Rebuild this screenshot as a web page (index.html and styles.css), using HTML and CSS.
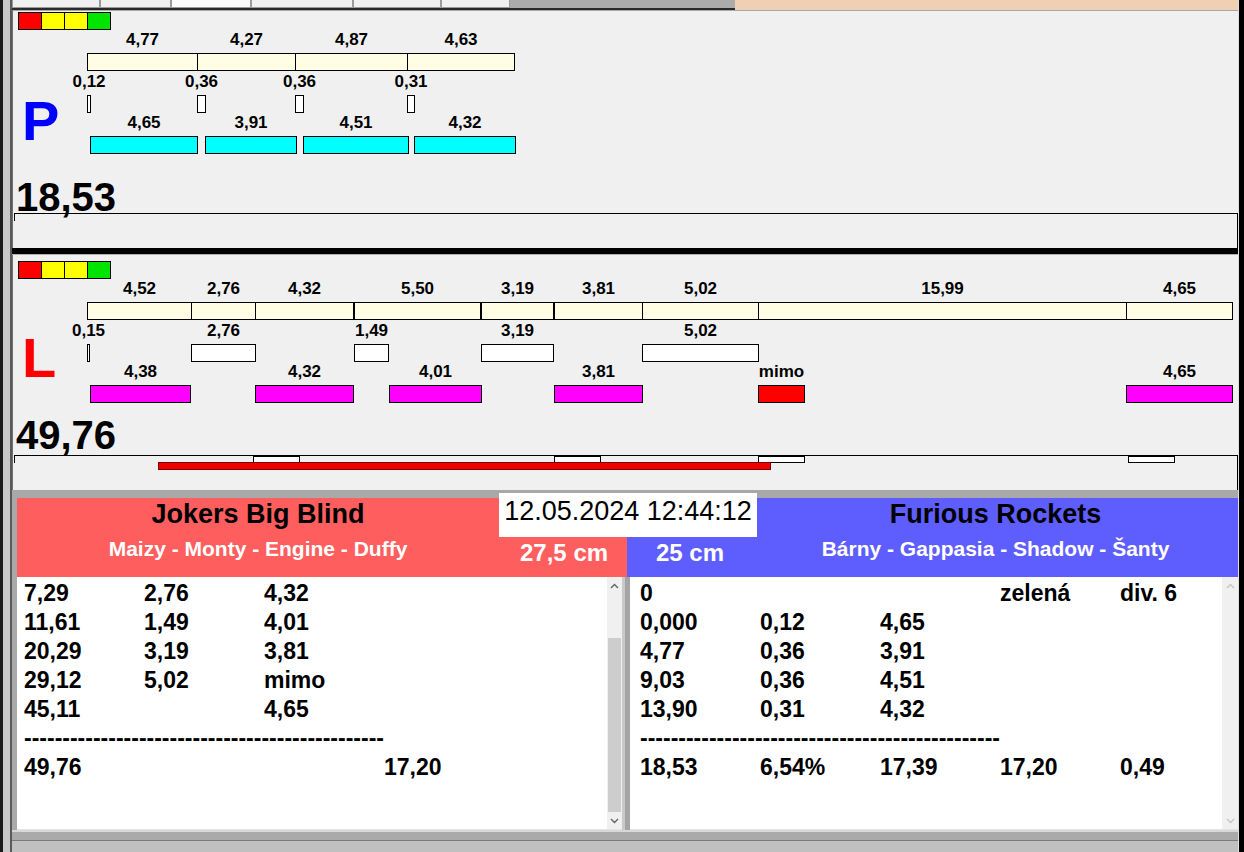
FILE: index.html
```html
<!DOCTYPE html>
<html lang="cs">
<head>
<meta charset="utf-8">
<title>Měření</title>
<link rel="stylesheet" href="styles.css">
</head>
<body>
<div class="app">
  <div class="edge-left"></div>
  <div class="main">
    <div class="topstrip">
      <div class="tabs">
        <span class="tab t1"></span>
        <span class="tab t2"></span>
        <span class="tab t3 sel"></span>
        <span class="tab t4"></span>
        <span class="tab t5"></span>
        <span class="tab t6"></span>
      </div>
      <div class="peach"></div>
    </div>

    <section class="panel panel-p">
      <div class="lights"><span class="light red"></span><span class="light yellow"></span><span class="light yellow"></span><span class="light green"></span></div>
      <div class="chart">
        <div class="letter letter-p">P</div>
        <div class="canvas">
          <div class="lbl r1" style="left:0;width:111px">4,77</div>
          <div class="lbl r1" style="left:110px;width:99px">4,27</div>
          <div class="lbl r1" style="left:208px;width:113px">4,87</div>
          <div class="lbl r1" style="left:320px;width:108px">4,63</div>
          <div class="bar b1" style="left:0;width:111px"></div>
          <div class="bar b1" style="left:110px;width:99px"></div>
          <div class="bar b1" style="left:208px;width:113px"></div>
          <div class="bar b1" style="left:320px;width:108px"></div>

          <div class="lbl r2" style="left:0;width:4px">0,12</div>
          <div class="lbl r2" style="left:110px;width:9px">0,36</div>
          <div class="lbl r2" style="left:208px;width:9px">0,36</div>
          <div class="lbl r2" style="left:320px;width:8px">0,31</div>
          <div class="bar b2" style="left:0;width:4px"></div>
          <div class="bar b2" style="left:110px;width:9px"></div>
          <div class="bar b2" style="left:208px;width:9px"></div>
          <div class="bar b2" style="left:320px;width:8px"></div>

          <div class="lbl r3" style="left:3px;width:108px">4,65</div>
          <div class="lbl r3" style="left:118px;width:92px">3,91</div>
          <div class="lbl r3" style="left:216px;width:106px">4,51</div>
          <div class="lbl r3" style="left:327px;width:102px">4,32</div>
          <div class="bar b3 cyan" style="left:3px;width:108px"></div>
          <div class="bar b3 cyan" style="left:118px;width:92px"></div>
          <div class="bar b3 cyan" style="left:216px;width:106px"></div>
          <div class="bar b3 cyan" style="left:327px;width:102px"></div>
        </div>
      </div>
      <div class="total">18,53</div>
      <div class="track"></div>
    </section>

    <div class="divider"></div>

    <section class="panel panel-l">
      <div class="lights"><span class="light red"></span><span class="light yellow"></span><span class="light yellow"></span><span class="light green"></span></div>
      <div class="chart">
        <div class="letter letter-l">L</div>
        <div class="canvas">
          <div class="lbl r1" style="left:0;width:105px">4,52</div>
          <div class="lbl r1" style="left:104px;width:65px">2,76</div>
          <div class="lbl r1" style="left:168px;width:99px">4,32</div>
          <div class="lbl r1" style="left:267px;width:127px">5,50</div>
          <div class="lbl r1" style="left:394px;width:73px">3,19</div>
          <div class="lbl r1" style="left:467px;width:89px">3,81</div>
          <div class="lbl r1" style="left:555px;width:117px">5,02</div>
          <div class="lbl r1" style="left:671px;width:369px">15,99</div>
          <div class="lbl r1" style="left:1039px;width:107px">4,65</div>
          <div class="bar b1" style="left:0;width:105px"></div>
          <div class="bar b1" style="left:104px;width:65px"></div>
          <div class="bar b1" style="left:168px;width:99px"></div>
          <div class="bar b1" style="left:267px;width:127px"></div>
          <div class="bar b1" style="left:394px;width:73px"></div>
          <div class="bar b1" style="left:467px;width:89px"></div>
          <div class="bar b1" style="left:555px;width:117px"></div>
          <div class="bar b1" style="left:671px;width:369px"></div>
          <div class="bar b1" style="left:1039px;width:107px"></div>

          <div class="lbl r2" style="left:0;width:3px">0,15</div>
          <div class="lbl r2" style="left:104px;width:65px">2,76</div>
          <div class="lbl r2" style="left:267px;width:35px">1,49</div>
          <div class="lbl r2" style="left:394px;width:73px">3,19</div>
          <div class="lbl r2" style="left:555px;width:117px">5,02</div>
          <div class="bar b2" style="left:0;width:3px"></div>
          <div class="bar b2" style="left:104px;width:65px"></div>
          <div class="bar b2" style="left:267px;width:35px"></div>
          <div class="bar b2" style="left:394px;width:73px"></div>
          <div class="bar b2" style="left:555px;width:117px"></div>

          <div class="lbl r3" style="left:3px;width:101px">4,38</div>
          <div class="lbl r3" style="left:168px;width:99px">4,32</div>
          <div class="lbl r3" style="left:302px;width:93px">4,01</div>
          <div class="lbl r3" style="left:467px;width:89px">3,81</div>
          <div class="lbl r3" style="left:671px;width:47px">mimo</div>
          <div class="lbl r3" style="left:1039px;width:107px">4,65</div>
          <div class="bar b3 mag" style="left:3px;width:101px"></div>
          <div class="bar b3 mag" style="left:168px;width:99px"></div>
          <div class="bar b3 mag" style="left:302px;width:93px"></div>
          <div class="bar b3 mag" style="left:467px;width:89px"></div>
          <div class="bar b3 miss" style="left:671px;width:47px"></div>
          <div class="bar b3 mag" style="left:1039px;width:107px"></div>
        </div>
      </div>
      <div class="total">49,76</div>
      <div class="track">
        <div class="tmark" style="left:239px;width:47px"></div>
        <div class="tmark" style="left:540px;width:47px"></div>
        <div class="tmark" style="left:744px;width:47px"></div>
        <div class="tmark" style="left:1114px;width:47px"></div>
        <div class="tbar" style="left:144px;width:613px"></div>
      </div>
    </section>

    <section class="bottom">
      <div class="headers">
        <div class="hdr hdr-left">
          <div class="titles">
            <div class="team">Jokers Big Blind</div>
            <div class="players">Maizy - Monty - Engine - Duffy</div>
          </div>
          <div class="cm">27,5 cm</div>
        </div>
        <div class="hdr hdr-right">
          <div class="cm">25 cm</div>
          <div class="titles">
            <div class="team">Furious Rockets</div>
            <div class="players">Bárny - Gappasia - Shadow - Šanty</div>
          </div>
        </div>
      </div>
      <div class="date">12.05.2024 12:44:12</div>

      <div class="lists">
        <div class="list list-left">
          <div class="rows">
            <div class="row"><span>7,29</span><span>2,76</span><span>4,32</span></div>
            <div class="row"><span>11,61</span><span>1,49</span><span>4,01</span></div>
            <div class="row"><span>20,29</span><span>3,19</span><span>3,81</span></div>
            <div class="row"><span>29,12</span><span>5,02</span><span>mimo</span></div>
            <div class="row"><span>45,11</span><span></span><span>4,65</span></div>
            <div class="row"><span class="dashes">-----------------------------------------------</span></div>
            <div class="row"><span>49,76</span><span></span><span></span><span>17,20</span></div>
          </div>
          <div class="sb">
            <div class="sb-btn"><svg width="9" height="6" viewBox="0 0 9 6"><path d="M1 5 L4.5 1.5 L8 5" fill="none" stroke="#606060" stroke-width="1.3"/></svg></div>
            <div class="sb-gap"></div>
            <div class="sb-thumb"></div>
            <div class="sb-fill"></div>
            <div class="sb-btn"><svg width="9" height="6" viewBox="0 0 9 6"><path d="M1 1 L4.5 4.5 L8 1" fill="none" stroke="#606060" stroke-width="1.3"/></svg></div>
          </div>
        </div>
        <div class="sep"></div>
        <div class="list list-right">
          <div class="rows">
            <div class="row"><span>0</span><span></span><span></span><span>zelená</span><span>div. 6</span></div>
            <div class="row"><span>0,000</span><span>0,12</span><span>4,65</span></div>
            <div class="row"><span>4,77</span><span>0,36</span><span>3,91</span></div>
            <div class="row"><span>9,03</span><span>0,36</span><span>4,51</span></div>
            <div class="row"><span>13,90</span><span>0,31</span><span>4,32</span></div>
            <div class="row"><span class="dashes">-----------------------------------------------</span></div>
            <div class="row"><span>18,53</span><span>6,54%</span><span>17,39</span><span>17,20</span><span>0,49</span></div>
          </div>
          <div class="sb">
            <div class="sb-btn"><svg width="9" height="6" viewBox="0 0 9 6"><path d="M1 5 L4.5 1.5 L8 5" fill="none" stroke="#c4c4c4" stroke-width="1.3"/></svg></div>
            <div class="sb-fill"></div>
            <div class="sb-btn"><svg width="9" height="6" viewBox="0 0 9 6"><path d="M1 1 L4.5 4.5 L8 1" fill="none" stroke="#c4c4c4" stroke-width="1.3"/></svg></div>
          </div>
        </div>
      </div>
      <div class="footer"></div>
    </section>
  </div>
  <div class="edge-right"></div>
</div>
</body>
</html>
```
FILE: styles.css
```css
* { box-sizing: border-box; margin: 0; padding: 0; }
html, body { width: 1244px; height: 852px; overflow: hidden; }
body {
  font-family: "Liberation Sans", Arial, sans-serif;
  font-weight: bold;
  color: #000;
  background: #f0f0f0;
}
.app { display: flex; width: 1244px; height: 852px; }
.edge-left {
  width: 12px;
  flex-shrink: 0;
  background: linear-gradient(to right, #1a1a1a 0, #1a1a1a 3px, #c8c8c8 3px, #c8c8c8 10px, #5a5a5a 10px, #5a5a5a 12px);
}
.edge-right {
  width: 6px;
  flex-shrink: 0;
  background: linear-gradient(to right, #e0e0e0 0, #e0e0e0 1px, #000 1px);
}
.main { width: 1226px; flex-shrink: 0; display: flex; flex-direction: column; }

/* top strip */
.topstrip { height: 10px; display: flex; flex-shrink: 0; }
.tabs { width: 723px; display: flex; background: #ababab; border-bottom: 2px solid #2a2a2a; }
.tab { height: 8px; background: #f0f0f0; border: 1px solid #9a9a9a; border-top: none; }
.tab.sel { background: #fbfbfb; }
.t1 { width: 88px; }
.t2 { width: 71px; }
.t3 { width: 80px; }
.t4 { width: 102px; }
.t5 { width: 88px; }
.t6 { width: 69px; }
.peach { flex: 1; background: #efd0b3; }

/* panels */
.panel {
  display: flex;
  flex-direction: column;
  flex-shrink: 0;
  border-left: 1px solid #6e6e6e;
  background: #f0f0f0;
}
.panel-p { height: 238px; border-top: 1px solid #a8a8a8; }
.panel-l { height: 235px; }
.divider { height: 7px; flex-shrink: 0; background: #000; border-bottom: 1px solid #b0b0b0; }

.lights { display: flex; margin-left: 5px; height: 18px; flex-shrink: 0; }
.panel-p .lights { margin-top: 1px; }
.panel-l .lights { margin-top: 6px; }
.light { width: 24px; height: 18px; border: 1px solid #000; margin-right: -1px; }
.red { background: #ff0000; }
.yellow { background: #ffff00; }
.green { background: #00e400; }

.chart { display: flex; height: 130px; flex-shrink: 0; }
.letter { width: 74px; font-size: 56px; line-height: 56px; padding-left: 9px; }
.letter-p { color: #0000ff; padding-top: 63px; }
.letter-l { color: #ff0000; padding-top: 51px; }
.canvas { position: relative; flex: 1; }

.lbl {
  position: absolute;
  display: flex;
  justify-content: center;
  white-space: nowrap;
  font-size: 17px;
  line-height: 20px;
  height: 20px;
}
.r1 { top: 0; }
.r2 { top: 42px; }
.r3 { top: 83px; }
.bar { position: absolute; height: 18px; border: 1px solid #000; }
.b1 { top: 23px; background: #fffde4; }
.b2 { top: 65px; background: #ffffff; }
.b3 { top: 106px; }
.cyan { background: #00ffff; }
.mag { background: #ff00ff; }
.miss { background: #ff0000; }

.total { font-size: 40px; line-height: 30px; height: 30px; padding-left: 3px; flex-shrink: 0; }
.panel-p .total { margin-top: 22px; }
.panel-l .total { margin-top: 11px; }

.track {
  position: relative;
  flex: 1;
  margin-left: 1px;
  border-top: 1px solid #000;
  border-right: 1px solid #000;
}
.panel-p .track { margin-top: 1px; }
.panel-l .track { margin-top: 5px; }
.track::before {
  content: "";
  position: absolute;
  left: 0;
  top: 0;
  width: 1px;
  height: 7px;
  background: #000;
}
.tmark { position: absolute; top: 0; height: 7px; background: #fff; border: 1px solid #000; }
.tbar { position: absolute; top: 6px; height: 8px; background: #ee0000; border: 1px solid #800000; }

/* bottom */
.bottom {
  position: relative;
  flex: 1;
  display: flex;
  flex-direction: column;
  background: #a9a9a9;
  padding-top: 8px;
}
.headers { display: flex; height: 79px; margin-left: 5px; flex-shrink: 0; }
.hdr-left { width: 610px; flex-shrink: 0; background: #ff5e5e; display: grid; grid-template-columns: 482px 1fr; }
.hdr-right { flex: 1; min-width: 0; background: #5e5eff; display: grid; grid-template-columns: 126px 1fr; }
.titles { display: flex; flex-direction: column; align-items: center; padding-top: 1px; white-space: nowrap; }
.team { font-size: 27px; line-height: 30px; color: #000; }
.players { font-size: 21px; line-height: 24px; color: #fff; margin-top: 8px; }
.cm { font-size: 24px; line-height: 28px; color: #fff; padding-top: 41px; white-space: nowrap; }
.hdr-left .cm { padding-left: 21px; }
.hdr-right .cm { padding-left: 29px; }

.date {
  position: absolute;
  left: 487px;
  top: 3px;
  width: 258px;
  height: 44px;
  background: #fff;
  font-weight: normal;
  font-size: 27px;
  line-height: 36px;
  text-align: center;
  white-space: nowrap;
}

.lists { display: flex; height: 253px; margin-left: 5px; flex-shrink: 0; }
.list { display: flex; background: #fff; border-bottom: 1px solid #e3e3e3; min-width: 0; }
.list-left { width: 605px; flex-shrink: 0; }
.list-right { flex: 1; }
.sep { width: 8px; flex-shrink: 0; background: #a4a4a4; border-left: 3px solid #c9c9c9; }
.rows { flex: 1; min-width: 0; overflow: hidden; padding-top: 2px; font-size: 23px; line-height: 29px; }
.list-left .rows { padding-left: 7px; }
.list-right .rows { padding-left: 10px; }
.row { display: grid; grid-template-columns: repeat(5, 120px); height: 29px; white-space: nowrap; }
.dashes { grid-column: 1 / -1; }

.sb { display: flex; flex-direction: column; flex-shrink: 0; background: #f0f0f0; }
.list-left .sb { width: 15px; }
.list-right .sb { width: 16px; }
.sb-btn { height: 17px; display: flex; align-items: center; justify-content: center; }
.sb-gap { height: 44px; }
.sb-thumb { height: 174px; background: #cdcdcd; margin: 0 1px; }
.sb-fill { flex: 1; }

.footer {
  height: 22px;
  flex-shrink: 0;
  background: linear-gradient(to bottom, #d8d8d8 0, #d8d8d8 2px, #aaaaaa 2px, #aaaaaa 10px, #7a7a7a 10px, #7a7a7a 11px, #c0c0c0 11px);
}
```
